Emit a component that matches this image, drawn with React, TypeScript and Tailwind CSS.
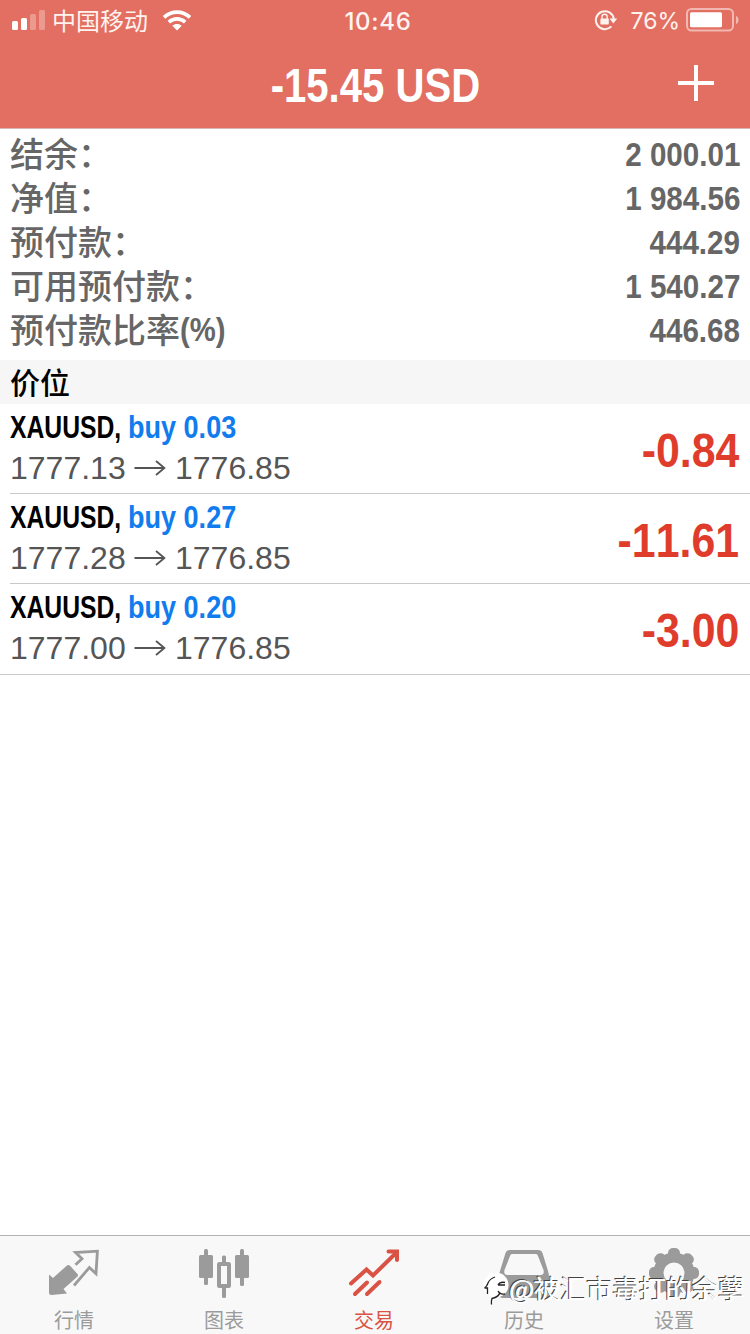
import clsx from "clsx";
import type { ReactNode } from "react";

const LATIN = "font-['Liberation_Sans','Noto_Sans_CJK_SC',sans-serif]";
const CJK = "font-['Noto_Sans_CJK_SC',sans-serif]";

const account = [
  { label: "结余：", value: "2 000.01" },
  { label: "净值：", value: "1 984.56" },
  { label: "预付款：", value: "444.29" },
  { label: "可用预付款：", value: "1 540.27" },
  { label: "预付款比率", suffix: "(%)", value: "446.68" },
];

const positions = [
  { id: 1, symbol: "XAUUSD,", side: "buy 0.03", open: "1777.13", current: "1776.85", profit: "-0.84" },
  { id: 2, symbol: "XAUUSD,", side: "buy 0.27", open: "1777.28", current: "1776.85", profit: "-11.61" },
  { id: 3, symbol: "XAUUSD,", side: "buy 0.20", open: "1777.00", current: "1776.85", profit: "-3.00" },
];

export default function App() {
  return (
    <div
      lang="zh-CN"
      className={clsx("relative flex h-[1334px] w-[750px] flex-col overflow-hidden bg-white", LATIN)}
    >
      <header className="h-[128px] flex-shrink-0 bg-[#e26f61] text-white">
        <StatusBar />
        <TitleBar />
      </header>
      <AccountSummary />
      <h2
        className={clsx(
          "flex h-11 flex-shrink-0 items-center bg-[#f6f6f6] pb-0.5 pl-2.5 text-[30px] leading-none font-medium text-black",
          CJK,
        )}
      >
        价位
      </h2>
      <main className="flex-1">
        {positions.map((p, idx) => (
          <PositionRow key={p.id} position={p} last={idx === positions.length - 1} />
        ))}
      </main>
      <TabBar />
      <Watermark />
    </div>
  );
}

function StatusBar() {
  return (
    <div className="grid h-10 grid-cols-[1fr_auto_1fr] items-center px-3">
      <div className="flex items-center">
        <svg width="34" height="20" viewBox="0 0 34 20" fill="#fff">
          <rect x="0" y="11" width="6" height="9" rx="1.5" />
          <rect x="9" y="8" width="6" height="12" rx="1.5" />
          <rect x="18" y="4" width="6" height="16" rx="1.5" opacity=".3" />
          <rect x="27" y="0" width="6" height="20" rx="1.5" opacity=".3" />
        </svg>
        <span className={clsx("ml-1.5 text-[24px] leading-10 text-[#fff3ef]", CJK)}>中国移动</span>
        <svg className="ml-3.5" width="30" height="21" viewBox="0 0 30 21">
          <g fill="none" stroke="#fff" strokeWidth="3.6">
            <path d="M2 7.4C9.4.4 20.6.4 28 7.4" />
            <path d="M6.8 12.2c4.800-4.400 11.600-4.400 16.400 0" />
          </g>
          <path d="M15 20.400l-4.700-4.600c2.700-2.400 6.700-2.400 9.400 0z" fill="#fff" />
        </svg>
      </div>
      <span className="pt-[3px] pl-1.5 font-[Inter,sans-serif] text-[24px] leading-[37px] font-medium tracking-[0.7px] text-[#fff3ef]">
        10:46
      </span>
      <div className="flex items-center justify-end">
        <svg width="24" height="22" viewBox="0 0 24 22">
          <path d="M17.4 17.4A9 9 0 1 1 19.8 10" fill="none" stroke="#fff3ef" strokeWidth="2" />
          <path d="M15.4 9.6h7.800l-3.800 5z" fill="#fff3ef" />
          <rect x="6.4" y="9.6" width="8.4" height="6" rx=".8" fill="#fff3ef" />
          <path d="M8 10V7.8a2.6 2.6 0 0 1 5.2 0V10" fill="none" stroke="#fff3ef" strokeWidth="1.4" />
        </svg>
        <span className="ml-3 pt-[3px] font-[Inter,sans-serif] text-[23px] leading-[37px] text-[#fff3ef]">76%</span>
        <svg className="-mr-0.5 ml-1.5" width="54" height="24" viewBox="0 0 54 24">
          <rect x="1" y="1" width="46" height="21.5" rx="4.5" fill="none" stroke="#fff" strokeWidth="2" opacity=".5" />
          <rect x="4" y="4.2" width="32" height="15" rx="1.5" fill="#fff" />
          <path d="M50 8c3.400 1 3.400 7 0 8z" fill="#fff" opacity=".5" />
        </svg>
      </div>
    </div>
  );
}

function TitleBar() {
  return (
    <div className="grid h-[88px] grid-cols-[1fr_auto_1fr] items-center">
      <h1 className="col-start-2 origin-center scale-x-[0.835] pt-px text-[48px] leading-[90px] font-bold">
        -15.45 USD
      </h1>
      <svg
        className="mr-9 mb-1.5 justify-self-end"
        width="36"
        height="36"
        viewBox="0 0 36 36"
        stroke="#fff"
        strokeWidth="4"
      >
        <path d="M0 18h36M18 0v36" />
      </svg>
    </div>
  );
}

function AccountSummary() {
  return (
    <dl className="h-[232px] flex-shrink-0 border-t border-[#d9b5b2] pt-[3px] text-[#666]">
      {account.map((row) => (
        <div key={row.label} className="flex h-11 items-center justify-between px-2.5">
          <dt className={clsx("flex items-center pb-0.5 text-[34px] leading-[42px] font-medium", CJK)}>
            {row.label}
            {row.suffix && (
              <Narrow className="origin-left scale-x-[0.86] text-[34px] leading-[42px]">{row.suffix}</Narrow>
            )}
          </dt>
          <dd>
            <Narrow className="origin-right scale-x-[0.87] text-[34px] leading-[44px]">{row.value}</Narrow>
          </dd>
        </div>
      ))}
    </dl>
  );
}

/** bold text squeezed horizontally, the scale comes in with className */
function Narrow({ className, children }: { className: string; children: ReactNode }) {
  return (
    <span
      className={clsx(
        "inline-block font-['Liberation_Sans',sans-serif] font-bold whitespace-pre [font-kerning:none]",
        className,
      )}
    >
      {children}
    </span>
  );
}

function PositionRow({ position, last }: { position: (typeof positions)[number]; last: boolean }) {
  return (
    <div className={clsx("flex border-b border-[#c8c7cc]", last ? "h-[91px] pl-2.5" : "ml-2.5 h-[90px]")}>
      <div className="flex-1">
        <div className="flex h-[46px]">
          <Narrow className="w-[118px] origin-left scale-x-[0.772] text-[32px] leading-[46px] text-black">
            {position.symbol}
          </Narrow>
          <Narrow className="origin-left scale-x-[0.845] text-[32px] leading-[46px] text-[#107cee]">
            {position.side}
          </Narrow>
        </div>
        <div className="flex h-9 items-center text-[32px] leading-9 text-[#555]">
          <span className="w-[124px]">{position.open}</span>
          <svg width="32" height="18" viewBox="0 0 32 18" fill="none" stroke="#555" strokeWidth="1.8">
            <path d="M.5 9h30M22 2l8.400 7-8.400 7" />
          </svg>
          <span className="ml-[9px]">{position.current}</span>
        </div>
      </div>
      <Narrow className="mr-[11px] origin-right scale-x-[0.893] text-[48px] leading-[94px] text-[#e03c2c]">
        {position.profit}
      </Narrow>
    </div>
  );
}

const tabs = [
  { label: "行情", icon: <QuotesIcon /> },
  { label: "图表", icon: <ChartIcon /> },
  { label: "交易", icon: <TradeIcon />, active: true },
  { label: "历史", icon: <HistoryIcon /> },
  { label: "设置", icon: <SettingsIcon /> },
];

function TabBar() {
  return (
    <nav className="grid h-[99px] flex-shrink-0 grid-cols-5 border-t border-[#b2b2b2] bg-[#f8f8f8]">
      {tabs.map((tab) => (
        <button
          type="button"
          key={tab.label}
          className={clsx("flex flex-col items-center pt-3 pr-0.5", tab.active ? "text-[#da5244]" : "text-[#9b9b9b]")}
        >
          {tab.icon}
          <span className={clsx("mt-[9px] text-[20px] leading-[26px]", CJK)}>{tab.label}</span>
        </button>
      ))}
    </nav>
  );
}

function QuotesIcon() {
  return (
    <svg width="52" height="50" viewBox="0 0 52 50" fill="currentColor">
      <path d="M1 26.500l4 3.500L19 17.500q1.600-1.200 3 .2l7.500 8.300q1.200 1.500-.2 2.800L15.500 41l3.500 4.400L3.500 47Q1 47 1 45z" />
      <path
        d="M27.500 16.800l6.500-6-6.500-6.300L49.400 3.200l-1.400 22.500-6.600-6.200L26 37.500"
        fill="none"
        stroke="currentColor"
        strokeWidth="2.800"
      />
    </svg>
  );
}

function ChartIcon() {
  return (
    <svg width="52" height="50" viewBox="0 0 52 50" fill="currentColor">
      <rect x="1" y="7" width="14" height="23" rx="1.500" />
      <rect x="6" y="1" width="4" height="36" rx="1.500" />
      <rect x="37" y="7" width="14" height="23" rx="1.500" />
      <rect x="42" y="1" width="4" height="37" rx="1.500" />
      <rect x="24" y="7.500" width="4" height="8" rx="1.500" />
      <rect x="24" y="38" width="4" height="12" rx="1.500" />
      <rect x="21" y="16" width="10" height="22" fill="none" stroke="currentColor" strokeWidth="4" rx=".5" />
    </svg>
  );
}

function TradeIcon() {
  return (
    <svg
      width="52"
      height="50"
      viewBox="0 0 52 50"
      fill="none"
      stroke="currentColor"
      strokeWidth="4"
      strokeLinecap="round"
    >
      <path d="M3 35.500L18.500 21.500l6.500 6L48 5" />
      <path d="M40.500 3.500h8.500v8.500" />
      <path d="M7 46l12-11.500M19 46l12.500-12" />
    </svg>
  );
}

function HistoryIcon() {
  return (
    <svg width="52" height="50" viewBox="0 0 52 50" fill="currentColor">
      <path
        fillRule="evenodd"
        d="M12 2h28q3.500 0 4.500 3l5.500 18q1 3 1 6v17q0 4-4 4H5q-4 0-4-4V29q0-3 1-6L7.500 5q1-3 4.500-3zM14 6q-1.400 0-2 2L6.500 22q-1.200 5 3 5h33q4.200 0 3-5L40 8q-.6-2-2-2z"
      />
    </svg>
  );
}

function SettingsIcon() {
  return (
    <svg width="52" height="50" viewBox="0 0 52 50">
      <circle cx="26" cy="25" r="15.500" fill="none" stroke="currentColor" strokeWidth="10" />
      {[0, 45, 90, 135, 180, 225, 270, 315].map((deg) => (
        <rect
          key={deg}
          x="20"
          y="0"
          width="12"
          height="12"
          rx="5"
          fill="currentColor"
          transform={`rotate(${deg} 26 25)`}
        />
      ))}
    </svg>
  );
}

function Watermark() {
  return (
    <div className="absolute top-[1270px] right-[6px] flex items-center text-white">
      <svg className="-mr-px" width="27" height="36" viewBox="0 0 27 36">
        <circle cx="13" cy="15" r="12.500" fill="#fff" />
        <path d="M8 34q4-8 12-10l-8-4z" fill="#fff" />
        <path
          d="M1.500 18q2.500-1.500 3.500-5 1.500-4 7-6M1.500 18h3v6M15 15q2-3.500 7-2.500M15 15h7M22 24q-5 1-7-3M17 22q-1 5-8 6.500-1 3-.5 6"
          fill="none"
          stroke="#222"
          strokeWidth="1.300"
        />
      </svg>
      <span
        className={clsx(
          "text-[26.3px] leading-[34px] whitespace-nowrap [text-shadow:-1px_-1px_0_#444,1px_0_0_#fff]",
          CJK,
        )}
      >
        @被汇市毒打的余孽
      </span>
    </div>
  );
}
